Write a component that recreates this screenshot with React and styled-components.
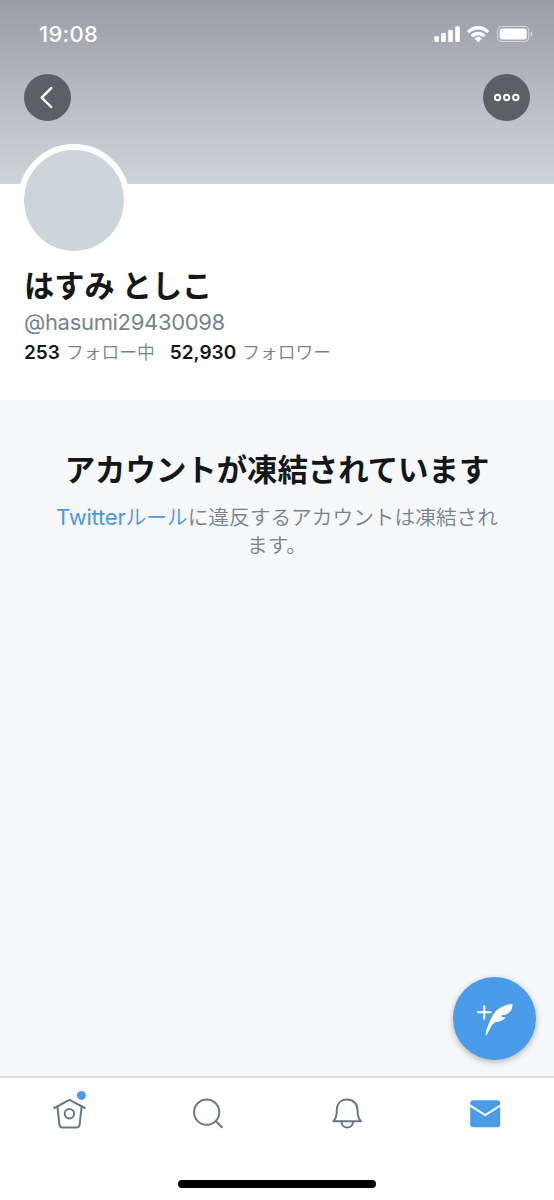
import styled, { createGlobalStyle } from "styled-components";

const GlobalStyle = createGlobalStyle`
  * {
    box-sizing: border-box;
  }
  body {
    margin: 0;
    background-color: #f5f7f9;
    font-family: Inter, "Noto Sans CJK JP", sans-serif;
  }
`;

const Screen = styled.div`
  width: 554px;
  height: 1200px;
  display: flex;
  flex-direction: column;
  overflow: hidden;
`;

const Cover = styled.header`
  height: 184px;
  flex-shrink: 0;
  padding: 0 24px;
  background: linear-gradient(
    #9a9da6 0,
    #a9adb5 55px,
    #b2b8bf 84px,
    #bcc3ca 120px,
    #ccd4da 184px
  );
`;

const StatusBar = styled.div`
  height: 74px;
  padding: 22px 0 0 15px;
  display: flex;
  align-items: flex-start;
  justify-content: space-between;
  color: white;
`;

const Time = styled.span`
  font-size: 22px;
  font-weight: 500;
  line-height: 25px;
  letter-spacing: 0.3px;
`;

const StatusIcons = styled.svg`
  width: 100px;
  height: 20px;
  margin: 2px -4px 0 0;
`;

const CoverButtons = styled.div`
  display: flex;
  justify-content: space-between;
`;

const RoundButton = styled.button`
  width: 47px;
  height: 47px;
  padding: 0;
  border: none;
  border-radius: 50%;
  background-color: #5b6064;
  cursor: pointer;
  svg {
    display: block;
  }
`;

const Profile = styled.section`
  height: 216px;
  flex-shrink: 0;
  padding-left: 24px;
  background-color: white;
`;

const Avatar = styled.div`
  width: 112.5px;
  height: 112.5px;
  margin: -40px 0 0 -6.5px;
  border: 6px solid white;
  border-radius: 50%;
  background-color: #ccd4dc;
  background-clip: padding-box;
`;

const Name = styled.h1`
  margin: 9.5px 0 0;
  font-size: 30.2px;
  font-weight: 700;
  line-height: 40px;
  color: #14171a;
`;

const Handle = styled.div`
  font-size: 22px;
  line-height: 28px;
  margin-top: 2px;
  letter-spacing: -0.32px;
  color: #748391;
`;

const Counts = styled.div`
  display: flex;
  align-items: baseline;
  margin-top: 3px;
  font-size: 17.8px;
  line-height: 28px;
`;

const Count = styled.span`
  margin-right: 15px;
  font-weight: 350;
  color: #748391;
  b {
    margin-right: 6px;
    font-weight: 600;
    font-size: 19px;
    color: #14171a;
  }
`;

const Content = styled.main`
  flex: 1;
  padding: 49px 50px 0;
  text-align: center;
  background-color: #f5f7f9;
`;

const Title = styled.h2`
  margin: 0;
  font-size: 30.4px;
  font-weight: 700;
  line-height: 42px;
  white-space: nowrap;
  color: #14171a;
`;

const Message = styled.p`
  margin: 12px 0 0;
  font-size: 20.7px;
  font-weight: 350;
  line-height: 28px;
  white-space: nowrap;
  color: #748391;
`;

const RuleLink = styled.a`
  color: #4a99e6;
  span {
    font-size: 22px;
    font-weight: 400;
    letter-spacing: -0.2px;
  }
`;

const ComposeButton = styled.button`
  position: absolute;
  left: 453px;
  top: 977px;
  width: 83px;
  height: 83px;
  padding: 0;
  border: none;
  border-radius: 50%;
  background-color: #4a9ceb;
  box-shadow: 0 2px 6px rgba(0, 0, 0, 0.28);
  cursor: pointer;
  svg {
    display: block;
  }
`;

const Footer = styled.footer`
  height: 124px;
  flex-shrink: 0;
  display: flex;
  flex-direction: column;
  align-items: center;
  justify-content: space-between;
  padding-bottom: 12px;
  border-top: 2px solid #e1e4e7;
  background-color: white;
`;

const Tabs = styled.nav`
  width: 100%;
  height: 70px;
  display: grid;
  grid-template-columns: repeat(4, 1fr);
  justify-items: center;
  align-items: center;
`;

const TabIcon = styled.svg`
  width: 48px;
  height: 48px;
  fill: none;
  stroke: #697885;
  stroke-width: 2;
  stroke-linecap: round;
  stroke-linejoin: round;
`;

const HomeIndicator = styled.div`
  width: 198px;
  height: 8px;
  border-radius: 4px;
  background-color: black;
`;

function PhoneStatus() {
  return (
    <StatusBar>
      <Time>19:08</Time>
      <StatusIcons viewBox="434 24 100 20" fill="white">
        <rect x="434.3" y="36" width="4.6" height="6" rx="1.2" />
        <rect x="441.2" y="33" width="4.6" height="9" rx="1.2" />
        <rect x="448.2" y="30" width="4.6" height="12" rx="1.2" />
        <rect x="455.2" y="26.2" width="4.6" height="15.8" rx="1.2" />
        <path d="M466.8 31.1 C473 24.2 483.6 24.2 489.4 31.1 L487 33.3 C482.3 28.3 474 28.3 469.2 33.3Z" />
        <path d="M470.6 34.9 C474.8 30.6 481.6 30.6 485.7 34.9 L483.3 37.2 C480.5 34.5 475.8 34.5 473 37.2Z" />
        <path d="M474.4 38.4 C476.6 36.3 479.8 36.3 482 38.4 L478.2 42.2Z" />
        <rect
          x="497.6"
          y="26.3"
          width="31.2"
          height="15.2"
          rx="4.4"
          fill="none"
          stroke="white"
          strokeOpacity=".5"
          strokeWidth="1.2"
        />
        <rect x="499.7" y="28.4" width="27" height="11" rx="2.5" />
        <path d="M530.7 31.4 C532.8 32.3 532.8 35.5 530.7 36.4Z" opacity=".6" />
      </StatusIcons>
    </StatusBar>
  );
}

function TabBar() {
  return (
    <Tabs>
      <TabIcon viewBox="45 1089 48 48">
        <path d="M54.2 1108 L69.5 1099.8 L84.8 1108" />
        <path d="M57.4 1106.6 L59.4 1124.6 Q59.7 1127.4 62.2 1127.4 H76.8 Q79.3 1127.4 79.6 1124.6 L81.6 1106.6" />
        <circle cx="69.4" cy="1113.7" r="4.7" />
        <circle cx="81.4" cy="1095.4" r="4.5" fill="#4a9ceb" stroke="none" />
      </TabIcon>
      <TabIcon viewBox="184 1089 48 48">
        <circle cx="206.7" cy="1112.2" r="12.6" />
        <path d="M215.9 1121.2 L222 1127.2" />
      </TabIcon>
      <TabIcon viewBox="322 1089 48 48">
        <path d="M333.4 1121.2 C336.4 1118.4 336.8 1114.5 336.8 1110.5 C336.8 1103.5 341 1099.6 347.1 1099.6 C353.2 1099.6 357.6 1103.5 357.6 1110.5 C357.6 1114.5 358 1118.4 361 1121.2 Z" />
        <path d="M341.5 1121.8 C342 1129.5 352.4 1129.5 353 1121.8" />
      </TabIcon>
      <TabIcon viewBox="461 1089 48 48">
        <rect x="470.2" y="1100.2" width="30" height="27" rx="3.2" fill="#4a9ceb" stroke="none" />
        <path d="M469 1104.8 L485.2 1115.1 L501.5 1104.8" stroke="white" strokeLinecap="butt" strokeLinejoin="miter" />
      </TabIcon>
    </Tabs>
  );
}

function App() {
  return (
    <>
      <GlobalStyle />
      <Screen>
        <Cover>
          <PhoneStatus />
          <CoverButtons>
            <RoundButton aria-label="戻る">
              <svg width="47" height="47" fill="none" stroke="white" strokeWidth="2.4" strokeLinecap="round" strokeLinejoin="round">
                <path d="M27.2 14.1 L17.7 23.6 L27.2 33" />
              </svg>
            </RoundButton>
            <RoundButton aria-label="その他">
              <svg width="47" height="47" fill="none" stroke="white" strokeWidth="1.9">
                <circle cx="14.6" cy="23.5" r="2.7" />
                <circle cx="23.7" cy="23.5" r="2.7" />
                <circle cx="32.8" cy="23.5" r="2.7" />
              </svg>
            </RoundButton>
          </CoverButtons>
        </Cover>
        <Profile>
          <Avatar />
          <Name>はすみ としこ</Name>
          <Handle>@hasumi29430098</Handle>
          <Counts>
            <Count>
              <b>253</b>フォロー中
            </Count>
            <Count>
              <b>52,930</b>フォロワー
            </Count>
          </Counts>
        </Profile>
        <Content>
          <Title>アカウントが凍結されています</Title>
          <Message>
            <RuleLink>
              <span>Twitter</span>ルール
            </RuleLink>
            に違反するアカウントは凍結され
            <br />
            ます。
          </Message>
        </Content>
        <Footer>
          <TabBar />
          <HomeIndicator />
        </Footer>
        <ComposeButton aria-label="ツイートする">
          <svg width="83" height="83" fill="none" stroke="white" strokeWidth="2">
            <path d="M24.2 35.3 H38.4 M31.3 28.2 V42.4" />
            <path
              d="M32.6 57.8 C32.8 53.6 34.6 49.4 36.6 44.8 C38.2 40.8 40.2 36.4 43.8 33.2 C48.4 29.6 53.6 27.4 59.4 26.9 C60 31.2 57.8 35.2 53.9 37 C51.8 38 49.6 38.3 47 38.8 C48.8 39.8 50.6 40.4 52.7 40.6 C50.2 43.8 46.4 45 41.9 45.2 C38.6 47.6 36.6 52.2 34 57.4 Q33 58.9 32.6 57.8Z"
              fill="white"
              stroke="none"
            />
          </svg>
        </ComposeButton>
      </Screen>
    </>
  );
}

export default App;
